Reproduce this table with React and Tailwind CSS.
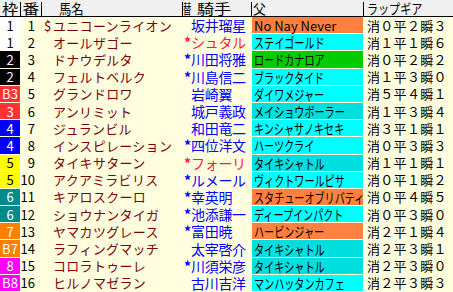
const rows = [
  { waku: '1', wk: 'bg-white text-black', name: 'ユニコーンライオン', mark: '$', jockey: '坂井瑠星', star: false, red: false, sire: 'No Nay Never', latin: true, sc: 'bg-[#ff8040]', lap: '消０平２瞬３' },
  { waku: '1', wk: 'bg-white text-black', name: 'オールザゴー', jockey: 'シュタル', star: true, red: true, sire: 'ステイゴールド', sc: 'bg-[#00ffff]', lap: '消１平１瞬６' },
  { waku: '2', wk: 'bg-black text-white', name: 'ドナウデルタ', jockey: '川田将雅', star: true, sire: 'ロードカナロア', sc: 'bg-[#00cc00]', lap: '消０平２瞬２' },
  { waku: '2', wk: 'bg-black text-white', name: 'フェルトベルク', jockey: '川島信二', star: true, sire: 'ブラックタイド', sc: 'bg-[#00ffff]', lap: '消１平３瞬０' },
  { waku: 'B3', wk: 'bg-[#ff3333] text-white', name: 'グランドロワ', jockey: '岩崎翼', sire: 'ダイワメジャー', sc: 'bg-[#00ffff]', lap: '消５平４瞬１' },
  { waku: '3', wk: 'bg-[#ff3333] text-white', name: 'アンリミット', jockey: '城戸義政', sire: 'メイショウボーラー', sc: 'bg-[#00dede]', lap: '消１平３瞬４' },
  { waku: '4', wk: 'bg-[#0000ff] text-white', name: 'ジュランビル', jockey: '和田竜二', sire: 'キンシャサノキセキ', sc: 'bg-[#00ffff]', lap: '消３平１瞬１' },
  { waku: '4', wk: 'bg-[#0000ff] text-white', name: 'インスピレーション', jockey: '四位洋文', star: true, sire: 'ハーツクライ', sc: 'bg-[#00ffff]', lap: '消０平３瞬３' },
  { waku: '5', wk: 'bg-[#ffff00] text-black', name: 'タイキサターン', jockey: 'フォーリ', star: true, red: true, sire: 'タイキシャトル', sc: 'bg-[#00dede]', lap: '消１平１瞬１' },
  { waku: '5', wk: 'bg-[#ffff00] text-black', name: 'アクアミラビリス', jockey: 'ルメール', star: true, sire: 'ヴィクトワールピサ', sc: 'bg-[#00ffff]', lap: '消０平１瞬２' },
  { waku: '6', wk: 'bg-[#008b8b] text-white', name: 'キアロスクーロ', jockey: '幸英明', star: true, sire: 'スタチューオブリバティ', sc: 'bg-[#ff8040]', lap: '消０平４瞬５' },
  { waku: '6', wk: 'bg-[#008b8b] text-white', name: 'ショウナンタイガ', jockey: '池添謙一', star: true, sire: 'ディープインパクト', sc: 'bg-[#00ffff]', lap: '消０平３瞬０' },
  { waku: '7', wk: 'bg-[#ff8000] text-white', name: 'ヤマカツグレース', jockey: '富田暁', star: true, sire: 'ハービンジャー', sc: 'bg-[#ff8040]', lap: '消２平１瞬４' },
  { waku: 'B7', wk: 'bg-[#ff8000] text-white', name: 'ラフィングマッチ', jockey: '太宰啓介', sire: 'タイキシャトル', sc: 'bg-[#00dede]', lap: '消２平３瞬１' },
  { waku: '8', wk: 'bg-[#ff00ff] text-white', name: 'コロラトゥーレ', jockey: '川須栄彦', star: true, sire: 'タイキシャトル', sc: 'bg-[#00dede]', lap: '消２平３瞬０' },
  { waku: 'B8', wk: 'bg-[#ff00ff] text-white', name: 'ヒルノマゼラン', jockey: '古川吉洋', sire: 'マンハッタンカフェ', sc: 'bg-[#00ffff]', lap: '消２平３瞬３' },
]

function Sep() {
  return <div className="w-px h-[14px] mt-[2px] bg-black shrink-0" />
}

function Header() {
  return (
    <div className="flex h-[17px] bg-[#f0f0f0] border-b border-black text-black text-[14px] leading-none">
      <div className="w-[20px] flex items-center justify-center">
        <span className="inline-block scale-x-[1.15]">枠</span>
      </div>
      <Sep />
      <div className="w-[20px] flex items-center justify-center">
        <span className="inline-block scale-x-[1.2]">番</span>
      </div>
      <Sep />
      <div className="w-[140px] flex items-center pl-[17px]">
        <span className="inline-block origin-left scale-x-[0.88] whitespace-nowrap">馬名</span>
      </div>
      <Sep />
      <div className="w-[68px] flex items-center">
        <span className="inline-block origin-left scale-x-[0.6] w-[9px]">替</span>
        <span className="inline-block origin-left scale-x-[1.22] ml-[5px] whitespace-nowrap">騎手</span>
      </div>
      <Sep />
      <div className="w-[111px] flex items-center pl-[1px]">
        <span className="inline-block origin-left scale-x-[0.93]">父</span>
      </div>
      <Sep />
      <div className="flex-1 flex items-center pl-[3px]">
        <span className="inline-block origin-left scale-x-[0.79] whitespace-nowrap">ラップギア</span>
      </div>
    </div>
  )
}

function Row({ r, i }) {
  const jc = r.red ? 'text-[#ff1a3c]' : 'text-[#0000ff]'
  return (
    <div className="flex-1 grid grid-cols-[20px_21px_141px_70px_111px_90px] pb-px min-h-0">
      <div className={`${r.wk} flex items-center justify-center text-[13px] leading-none`}>{r.waku}</div>
      <div className="flex items-center justify-end pr-[6px] text-[13px] text-black leading-none">{i + 1}</div>
      <div className="flex items-center pl-[3px] text-[13px] tracking-[0.3px] text-[#800000] leading-none whitespace-nowrap">
        <span className="w-[9px] shrink-0">{r.mark || ''}</span>
        <span>{r.name}</span>
      </div>
      <div className={`flex items-center pl-[2px] text-[14px] tracking-[-0.3px] leading-none whitespace-nowrap ${jc}`}>
        <span className="w-[7px] shrink-0 text-[14px] font-bold">{r.star ? '*' : ''}</span>
        <span>{r.jockey}</span>
      </div>
      <div className={`${r.sc} flex items-center pl-[2px] text-black leading-none whitespace-nowrap`}>
        {r.latin ? (
          <span className="text-[13px]">{r.sire}</span>
        ) : (
          <span className="inline-block origin-left scale-x-[0.72] text-[14px]">{r.sire}</span>
        )}
      </div>
      <div className="flex items-center pl-[4px] text-[13px] tracking-[0.3px] text-black leading-none whitespace-nowrap">
        {r.lap}
      </div>
    </div>
  )
}

export default function App() {
  return (
    <div className="w-[453px] h-[292px] bg-[#ffffe0] flex flex-col overflow-hidden font-['Noto_Sans_CJK_JP',sans-serif]">
      <Header />
      <div className="flex-1 flex flex-col">
        {rows.map((r, i) => (
          <Row key={i} r={r} i={i} />
        ))}
      </div>
    </div>
  )
}
